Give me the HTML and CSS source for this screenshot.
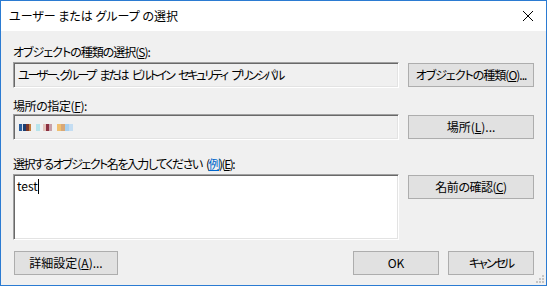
FILE: index.html
```html
<html>
  <head>
    <meta charset="utf-8">
    <link rel="stylesheet" href="styles.css">
  </head>
  <body>
    <div class="window">
      <div class="titlebar">
        <span class="title">ユーザー または グループ の選択</span>
        <svg class="close" width="12" height="12" viewBox="0 0 12 12">
          <path d="M1 1 L11 11 M11 1 L1 11" stroke="#000" stroke-width="1" fill="none"/>
        </svg>
      </div>
      <div class="dialog">
        <div class="label first">オブジェクトの種類の選択(<u>S</u>):</div>
        <div class="row">
          <div class="field kinds">ユーザー、グループ または ビルトイン セキュリティ プリンシパル</div>
          <button class="btn side tight">オブジェクトの種類(<u>O</u>)...</button>
        </div>

        <div class="label second">場所の指定(<u>F</u>):</div>
        <div class="row">
          <div class="field masked">
            <span class="mosaic">
              <i style="width:3px;background:#2a5f9e"></i>
              <i style="width:1px;background:#d8e2ee"></i>
              <i style="width:3px;background:#1d3d6e"></i>
              <i style="width:3px;background:#7a3528"></i>
              <i style="width:2px;background:#c57f3c"></i>
              <i style="width:5px;background:transparent"></i>
              <i style="width:4px;background:#b8e4ec"></i>
              <i style="width:3px;background:transparent"></i>
              <i style="width:3px;background:#e4c4bc"></i>
              <i style="width:3px;background:#8b3040"></i>
              <i style="width:3px;background:#c8a0a8"></i>
              <i style="width:5px;background:transparent"></i>
              <i style="width:4px;background:#f0c070"></i>
              <i style="width:4px;background:#d8a878"></i>
              <i style="width:4px;background:#a8d0f0"></i>
              <i style="width:4px;background:#c4ddf2"></i>
            </span>
          </div>
          <button class="btn side">場所(<u>L</u>)...</button>
        </div>

        <div class="label third">選択するオブジェクト名を入力してください (<a class="link">例</a>)(<u>E</u>):</div>
        <div class="row top">
          <div class="field area">test<span class="caret"></span></div>
          <button class="btn side check">名前の確認(<u>C</u>)</button>
        </div>

        <div class="footer">
          <button class="btn adv">詳細設定(<u>A</u>)...</button>
          <span class="spacer"></span>
          <button class="btn ok">OK</button>
          <button class="btn cancel">キャンセル</button>
        </div>
      </div>
      <svg class="grip" width="9" height="9" viewBox="0 0 9 9">
        <rect x="6" y="0" width="2" height="2" fill="#c4c4c4"/>
        <rect x="3" y="3" width="2" height="2" fill="#c4c4c4"/>
        <rect x="6" y="3" width="2" height="2" fill="#c4c4c4"/>
        <rect x="0" y="6" width="2" height="2" fill="#c4c4c4"/>
        <rect x="3" y="6" width="2" height="2" fill="#c4c4c4"/>
        <rect x="6" y="6" width="2" height="2" fill="#c4c4c4"/>
      </svg>
    </div>
  </body>
</html>
```

FILE: styles.css
```css
body{
  margin: 0;
  font: 12px "Noto Sans CJK JP", "Liberation Sans", sans-serif;
  font-feature-settings: "palt";
  color: #000;
}
.window{
  position: relative;
  width: 547px;
  height: 286px;
  box-sizing: border-box;
  border: 1px solid #2b7bd2;
  background: #f0f0f0;
  display: flex;
  flex-direction: column;
}
.titlebar{
  height: 30px;
  background: #fff;
  display: flex;
  align-items: center;
  padding: 0 9px 0 8px;
}
.title{
  flex: 1;
  line-height: 16px;
}
.close{
  margin-right: 3px;
}
.dialog{
  flex: 1;
  padding: 0 12px;
  display: flex;
  flex-direction: column;
}
.label{
  line-height: 16px;
  margin-bottom: 2px;
}
.label.first{
  margin-top: 13px;
  letter-spacing: -1px;
}
.label.second{
  margin-top: 10px;
  margin-bottom: 0;
  letter-spacing: -0.4px;
}
.label.third{
  margin-top: 16px;
  letter-spacing: -1.5px;
  word-spacing: 3px;
}
.link{
  color: #0066cc;
  text-decoration: underline;
}
.row{
  display: flex;
  align-items: center;
  gap: 9px;
}
.row.top{
  align-items: flex-start;
}
.field{
  flex: 1;
  height: 26px;
  box-sizing: border-box;
  border: 1px solid;
  border-color: #a0a0a0 #fff #fff #a0a0a0;
  box-shadow: inset 1px 1px 0 #696969, inset -1px -1px 0 #e3e3e3;
  padding: 0 4px;
  line-height: 24px;
  white-space: nowrap;
  overflow: hidden;
}
.field.kinds{
  letter-spacing: -2.2px;
  word-spacing: 4px;
}
.field.masked{
  display: flex;
  align-items: center;
}
.field.area{
  height: 66px;
  background: #fff;
  line-height: 18px;
  padding-top: 2px;
  padding-left: 3px;
}
.caret{
  display: inline-block;
  width: 1px;
  height: 15px;
  background: #000;
  vertical-align: -3px;
}
.mosaic{
  display: flex;
  height: 7px;
  margin-left: 1px;
}
.mosaic i{
  display: block;
  height: 7px;
}
.btn{
  font: inherit;
  font-feature-settings: "palt";
  height: 24px;
  box-sizing: border-box;
  border: 1px solid #adadad;
  background: #e1e1e1;
  color: #000;
  padding: 0;
  line-height: 22px;
  white-space: nowrap;
}
.btn.side{
  width: 126px;
}
.btn.tight{
  letter-spacing: -1px;
}
.btn.check{
  letter-spacing: -0.5px;
}
.row.top .btn.side{
  margin-top: 1px;
}
.footer{
  display: flex;
  margin-top: 11px;
  gap: 9px;
}
.spacer{
  flex: 1;
}
.btn.adv{
  width: 104px;
  margin-left: 1px;
}
.btn.ok{
  width: 86px;
}
.btn.cancel{
  width: 86px;
  letter-spacing: -2px;
}
.grip{
  position: absolute;
  right: 1px;
  bottom: 1px;
}
```
